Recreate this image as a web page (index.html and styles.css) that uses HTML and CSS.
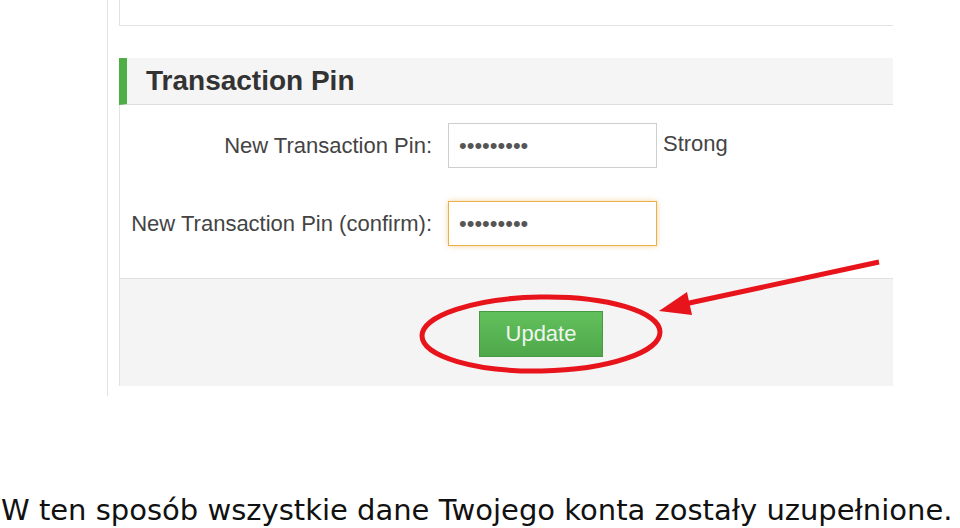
FILE: index.html
```html
<!DOCTYPE html>
<html lang="pl">
<head>
    <meta charset="UTF-8">
    <meta name="viewport" content="width=device-width, initial-scale=1.0">
    <title>Transaction Pin</title>
    <link rel="stylesheet" href="styles.css">
</head>
<body>
    <div class="shot">
        <div class="frame">
            <div class="top-box"></div>

            <div class="panel">
                <h2 class="panel-title">Transaction Pin</h2>
                <div class="panel-body">
                    <label class="field-label" for="pin">New Transaction Pin:</label>
                    <input class="field" type="password" id="pin" value="123456789">
                    <span class="strength">Strong</span>

                    <label class="field-label" for="pin2">New Transaction Pin (confirm):</label>
                    <input class="field field-focus" type="password" id="pin2" value="123456789">
                    <span></span>
                </div>
                <div class="panel-footer">
                    <button class="btn-update">Update</button>
                </div>
            </div>
        </div>

        <!-- czerwone zaznaczenie na zrzucie -->
        <svg class="marks" width="960" height="400" viewBox="0 0 960 400">
            <ellipse cx="541" cy="334" rx="119" ry="37" fill="none" stroke="#e8141b" stroke-width="5" transform="rotate(-1 541 334)"/>
            <line x1="879" y1="262" x2="680" y2="305" stroke="#e8141b" stroke-width="5"/>
            <polygon points="659,311 687,292 692,315" fill="#e8141b"/>
        </svg>
    </div>

    <p class="caption">W ten sposób wszystkie dane Twojego konta zostały uzupełnione.</p>
</body>
</html>
```

FILE: styles.css
```css
body {
    margin: 0;
    padding: 0;
    background: #fff;
    font-family: 'Liberation Sans', Arial, sans-serif;
    color: #444;
}

.shot {
    position: relative;
    height: 490px;
    padding-left: 107px;
}

.frame {
    width: 774px;
    height: 396px;
    padding-left: 11px;
    border-left: 1px solid #e2e2e2;
}

.top-box {
    height: 25px;
    border-left: 1px solid #e2e2e2;
    border-bottom: 1px solid #e2e2e2;
    margin-bottom: 32px;
}

.panel {
    border-left: 1px solid #e2e2e2;
}

.panel-title {
    margin: 0;
    height: 46px;
    line-height: 46px;
    margin-left: -1px;
    padding-left: 19px;
    background: #f5f5f5;
    border-left: 8px solid #4fae45;
    border-bottom: 1px solid #dedede;
    font-size: 28px;
    font-weight: bold;
    color: #333;
}

.panel-body {
    display: grid;
    grid-template-columns: 312px 209px auto;
    column-gap: 16px;
    row-gap: 33px;
    align-items: center;
    padding: 18px 0 32px;
    background: #fff;
}

.field-label {
    text-align: right;
    font-size: 22px;
    color: #444;
}

.field {
    box-sizing: border-box;
    width: 209px;
    height: 45px;
    padding: 0 10px;
    border: 1px solid #cfcfcf;
    font-size: 22px;
    color: #555;
    outline: none;
}

.field-focus {
    border-color: #e9b04e;
    box-shadow: 0 0 5px rgba(240, 170, 60, 0.55);
}

.strength {
    margin-left: -10px;
    margin-top: -4px;
    font-size: 22px;
    color: #444;
}

.panel-footer {
    height: 108px;
    padding: 32px 0 0 359px;
    box-sizing: border-box;
    background: #f4f4f4;
    border-top: 1px solid #e0e0e0;
}

.btn-update {
    width: 124px;
    height: 46px;
    background: linear-gradient(#62c05c, #4ea84a);
    border: 1px solid #469a42;
    color: #eef6ee;
    font-family: 'Liberation Sans', Arial, sans-serif;
    font-size: 22px;
    cursor: pointer;
}

.marks {
    position: absolute;
    left: 0;
    top: 0;
    pointer-events: none;
}

.caption {
    margin: 0;
    padding-left: 1px;
    font-family: 'DejaVu Sans', Verdana, sans-serif;
    font-size: 29px;
    line-height: 40px;
    color: #111;
    white-space: nowrap;
}
```
